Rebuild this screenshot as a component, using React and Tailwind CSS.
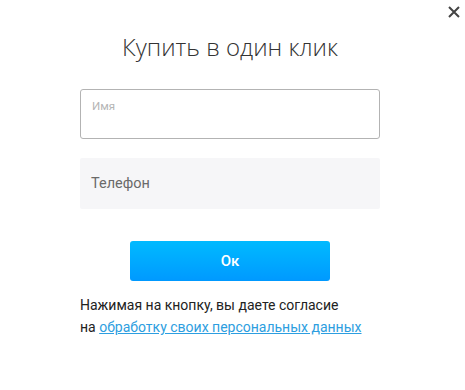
export default function App() {
  return (
    <div className="relative w-[465px] h-[390px] bg-white overflow-hidden">
      <button className="absolute left-[447px] top-[5px] w-[14px] h-[14px] flex items-center justify-center">
        <svg width="12" height="12" viewBox="0 0 12 12">
          <path d="M1 1 L11 11 M11 1 L1 11" stroke="#444" strokeWidth="2" />
        </svg>
      </button>
      <div className="w-[300px] ml-[80px] pt-[30px] flex flex-col">
        <h1 className="text-center text-[24px] leading-[34px] font-light text-[#333] font-['Open_Sans',sans-serif]">
          Купить в один клик
        </h1>
        <div className="mt-[25px] h-[50px] border border-[#b3b3b3] rounded-[3px] pl-[11px] pt-[8px] text-[11.5px] text-[#b5b5b5] font-['Roboto',sans-serif]">
          Имя
        </div>
        <div className="mt-[19px] h-[51px] bg-[#f6f6f8] rounded-[2px] pl-[11px] flex items-center text-[14.5px] text-[#6a6a6a] font-['Roboto',sans-serif]">
          Телефон
        </div>
        <div className="mt-[32px] flex justify-center">
          <div className="w-[200px] h-[40px] rounded-[3px] bg-gradient-to-b from-[#00baff] to-[#0099ff] flex items-center justify-center text-white text-[15px] font-medium font-['Roboto',sans-serif]">
            Ок
          </div>
        </div>
        <div className="mt-[13px] text-[14px] leading-[22px] text-[#222] font-['Roboto',sans-serif]">
          <div>Нажимая на кнопку, вы даете согласие</div>
          <div>
            на <a className="text-[#2d9ee0] underline">обработку своих персональных данных</a>
          </div>
        </div>
      </div>
    </div>
  );
}
